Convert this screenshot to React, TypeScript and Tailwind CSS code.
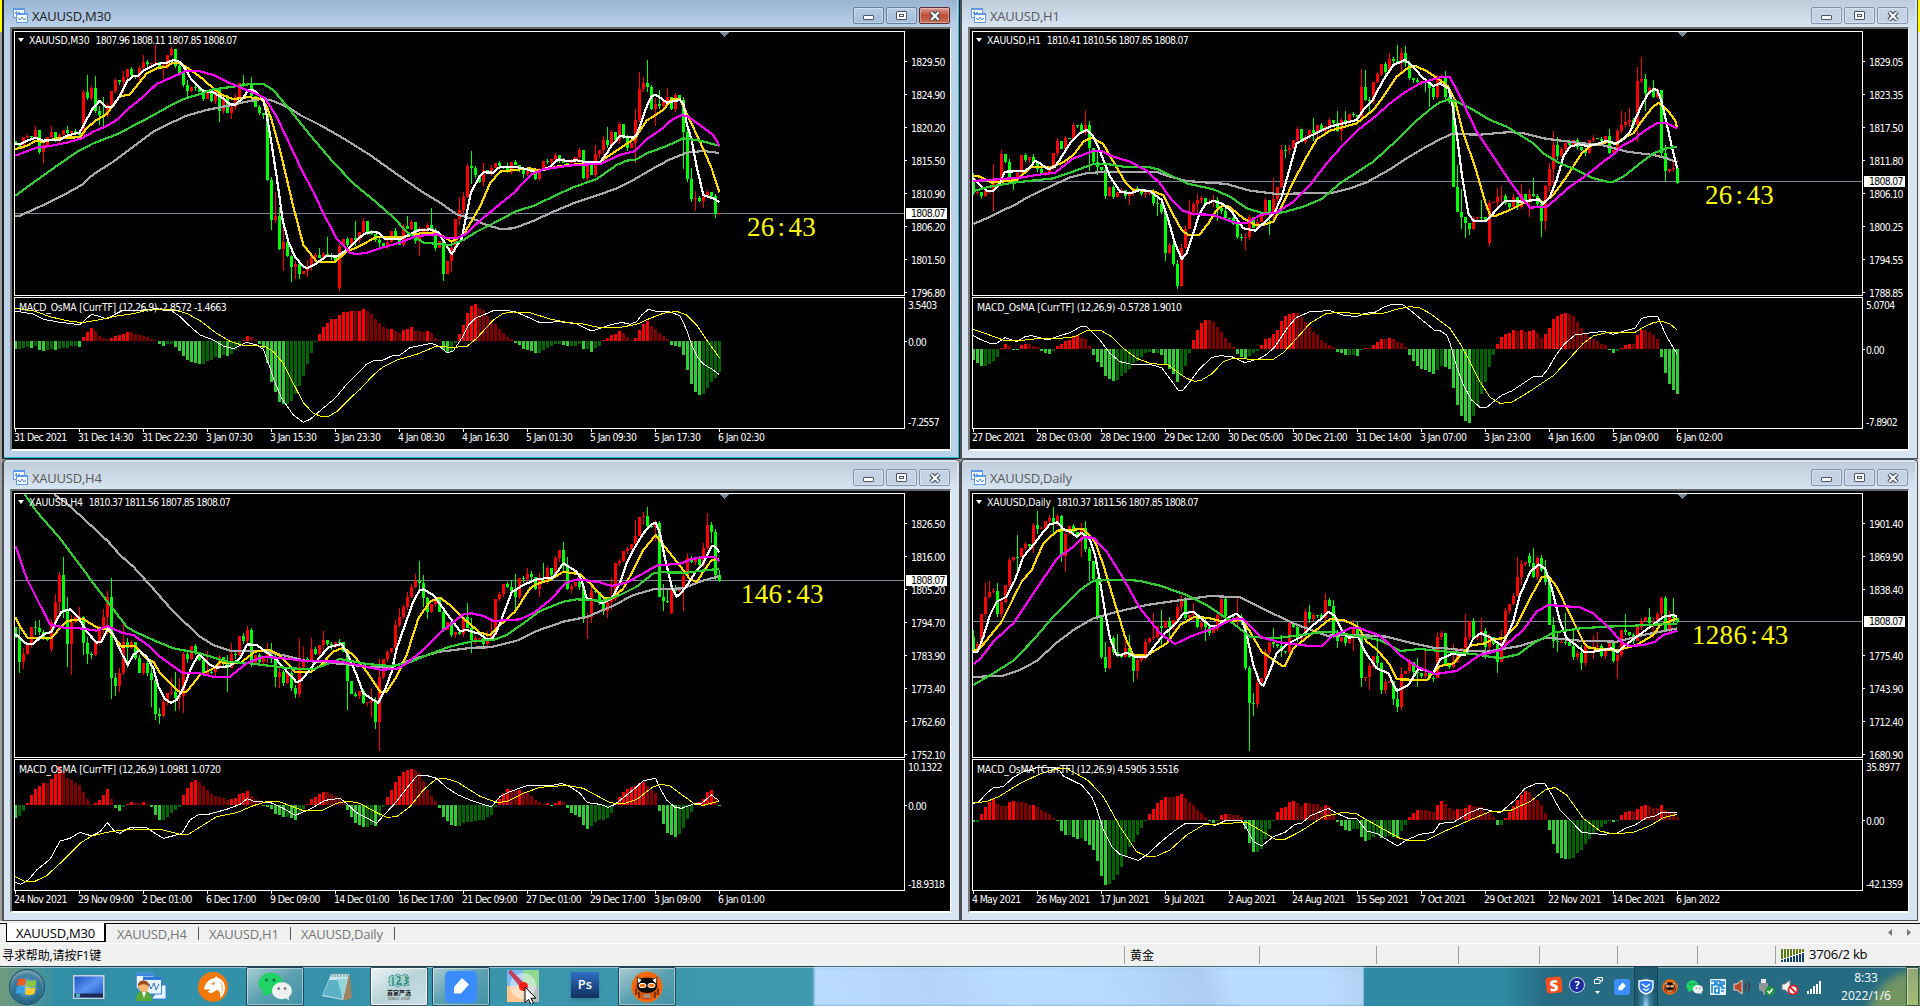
import type { ReactNode } from 'react';

// Chart data is stored in thirds of a pixel, one candle every 12 units.
const STEP = 12;

type Wicks = Record<number, [number, number]>;

interface ChartData {
  title: string;
  ohlc: string;
  macd: string;
  x0: number;
  y0: number;
  zero: number;
  price: number;
  prices: string[];
  range: [string, string];
  dates: string[];
  timer: string;
  timerX: number;
  open: number;
  closes: string;
  gaps: Record<number, number>;
  wicks: Wicks;
  hist: string;
  ma: { gray: string; green: string; gold: string; magenta: string; white: string };
  fast: string;
  slow: string;
}

const m30: ChartData = {
  title: 'XAUUSD,M30',
  ohlc: '1807.96 1808.11 1807.85 1808.07',
  macd: '-2.8572 -1.4663',
  x0: 46,
  y0: 0,
  zero: 1023,
  price: 640,
  prices: ['1829.50', '1824.90', '1820.20', '1815.50', '1810.90', '1806.20', '1801.50', '1796.80'],
  range: ['3.5403', '-7.2557'],
  dates: ['31 Dec 2021', '31 Dec 14:30', '31 Dec 22:30', '3 Jan 07:30', '3 Jan 15:30', '3 Jan 23:30', '4 Jan 08:30', '4 Jan 16:30', '5 Jan 01:30', '5 Jan 09:30', '5 Jan 17:30', '6 Jan 02:30'],
  timer: '26:43',
  timerX: 732,
  open: 424,
  closes:
    '436 436 412 408 412 390 455 436 412 396 424 405 390 398 393 400 404 276 293 264 334 345 345 315 273 240 245 232 207 226 232 205 186 192 188 186 205 196 165 147 197 220 254 272 262 264 275 297 275 302 265 334 293 338 320 290 250 255 250 288 322 340 346 540 660 648 748 726 768 800 792 822 814 802 772 765 773 763 767 770 785 738 717 735 713 720 696 662 697 703 720 730 738 726 692 710 735 678 686 667 724 705 685 675 690 743 722 822 784 745 657 630 592 498 504 524 545 510 520 503 490 497 497 515 486 495 510 523 514 512 537 510 484 486 478 465 480 488 490 484 472 450 535 495 525 463 450 420 435 396 420 372 413 443 428 360 267 250 262 327 312 318 305 291 327 286 300 396 536 597 595 603 590 576 588 642 640',
  gaps: { 81: 865 },
  wicks: {
    5: [378, 412], 7: [428, 488], 9: [378, 414], 13: [378, 402], 17: [270, 385], 18: [225, 300], 20: [228, 340], 21: [318, 375], 22: [290, 378], 27: [212, 280], 32: [165, 208], 35: [135, 190], 37: [188, 237], 43: [240, 290],
    51: [262, 365], 54: [310, 357], 57: [225, 262], 59: [230, 300], 64: [530, 690], 65: [577, 668], 66: [620, 750], 67: [675, 812], 69: [765, 846], 70: [782, 838], 71: [782, 836], 73: [780, 830], 76: [743, 775], 78: [711, 768], 85: [662, 738], 98: [648, 688],
    101: [680, 768], 104: [625, 690], 107: [718, 842], 109: [735, 816], 111: [592, 675], 112: [577, 650], 114: [453, 552], 117: [490, 557], 145: [435, 530], 147: [408, 468], 148: [382, 445], 155: [328, 490], 156: [216, 365], 157: [232, 277], 158: [180, 275], 160: [295, 378], 161: [270, 326],
    163: [264, 305], 167: [290, 507], 168: [388, 545], 169: [505, 605], 170: [574, 632], 172: [588, 624],
  },
  hist:
    '-24 -24 -21 -18 -20 -14 -26 -30 -28 -24 -26 -24 -20 -20 -15 -14 -18 12 27 38 30 16 8 6 9 14 17 20 27 26 21 17 15 12 6 3 -8 -14 -10 -8 -18 -30 -45 -57 -62 -66 -68 -68 -60 -58 -48 -50 -42 -44 -40 -28 -10 3 15 12 3 -8 -20 -65 -123 -153 -182 -190 -188 -180 -158 -135 -105 -70 -36 -3 21 42 54 66 67 79 86 87 90 89 90 96 90 81 66 54 42 36 37 30 24 33 36 42 30 30 27 30 24 9 4 -27 -33 -30 -6 21 48 84 105 111 99 93 75 62 50 36 24 12 5 -5 -12 -23 -26 -30 -36 -35 -26 -20 -14 -9 -8 -12 -15 -15 -14 -8 -24 -23 -32 -22 -15 3 9 18 20 30 23 12 3 9 33 51 60 45 36 24 15 6 -12 -15 -18 -42 -87 -129 -153 -162 -158 -140 -122 -110 -93',
  ma: {
    white:
      '46,432 58,433 82,422 106,413 130,422 154,420 178,420 202,407 238,398 250,378 262,355 275,330 299,302 318,320 338,320 358,290 382,243 400,228 415,228 430,212 470,192 500,188 520,180 540,186 558,210 575,240 610,273 640,277 670,295 690,313 706,314 730,293 745,270 765,272 790,300 800,345 812,415 830,530 848,660 865,725 885,770 910,800 922,804 945,793 980,768 1010,770 1040,750 1090,703 1115,695 1135,698 1155,718 1200,718 1250,692 1290,688 1315,697 1355,762 1385,715 1400,640 1412,580 1438,530 1452,517 1480,518 1500,500 1540,500 1570,505 1610,517 1650,500 1675,478 1700,483 1730,481 1760,487 1800,487 1820,460 1835,437 1860,408 1900,413 1912,400 1940,320 1955,288 1967,284 1980,293 2000,308 2040,300 2050,310 2060,370 2075,420 2090,500 2110,585 2140,595 2158,606',
    gold:
      '46,447 80,438 106,423 130,425 180,413 240,412 260,385 285,363 320,342 358,290 390,283 440,220 470,205 500,200 515,190 540,190 560,202 600,230 640,265 665,285 700,297 720,295 745,291 785,297 800,320 815,360 840,450 880,620 910,735 950,785 1005,785 1040,755 1080,738 1130,710 1200,712 1260,700 1310,697 1355,725 1390,705 1440,620 1470,550 1500,515 1590,505 1620,512 1680,498 1740,492 1800,485 1860,445 1905,415 1940,362 1990,330 2015,297 2040,297 2060,340 2100,425 2135,505 2158,577',
    magenta:
      '46,467 75,456 110,443 150,438 200,428 245,415 280,395 320,378 350,360 390,322 430,290 470,252 520,230 560,212 600,214 640,225 680,245 720,262 760,278 795,295 830,350 870,435 910,520 940,575 970,640 1010,715 1050,758 1070,763 1100,758 1150,742 1200,728 1250,708 1310,703 1340,715 1370,715 1400,700 1440,662 1500,612 1540,580 1595,523 1630,508 1720,495 1800,492 1860,465 1905,453 1940,418 1985,387 2015,360 2045,345 2065,350 2095,372 2140,405 2158,437',
    green:
      '46,588 90,555 160,505 235,453 280,430 350,403 430,362 500,323 545,299 590,285 640,268 700,260 760,251 792,253 820,270 870,330 930,405 1000,487 1060,550 1130,608 1180,652 1220,695 1270,728 1350,735 1390,720 1430,695 1480,670 1550,633 1600,618 1680,580 1720,562 1790,537 1850,495 1880,482 1910,478 1940,460 2000,438 2050,415 2100,422 2158,437',
    gray:
      '46,648 60,647 130,615 200,580 245,555 280,523 340,485 400,440 460,395 510,370 560,347 620,330 680,318 740,305 790,296 820,303 870,325 900,345 960,375 1030,415 1110,465 1190,522 1270,578 1320,608 1370,643 1430,660 1450,672 1500,687 1540,685 1600,663 1660,635 1720,610 1800,583 1850,565 1900,540 1960,505 2010,478 2060,458 2110,453 2158,459',
  },
  fast:
    '46,933 100,942 130,958 180,967 240,974 258,957 275,943 300,950 322,957 345,943 370,930 430,930 470,926 515,932 540,950 560,970 600,1005 640,1020 670,1038 700,1046 740,1027 770,1035 790,1048 805,1090 820,1135 845,1195 880,1245 910,1267 930,1258 965,1228 1005,1195 1040,1153 1075,1118 1100,1092 1120,1083 1150,1080 1175,1068 1200,1065 1230,1043 1295,1030 1320,1040 1340,1057 1358,1055 1385,1015 1405,975 1425,955 1445,947 1480,932 1510,930 1545,935 1580,950 1620,968 1680,965 1730,972 1775,993 1800,985 1830,975 1865,967 1890,973 1910,965 1925,945 1945,928 1965,933 2010,936 2040,947 2060,990 2075,1035 2095,1075 2110,1092 2135,1107 2158,1124',
  slow:
    '46,925 100,932 150,950 200,962 245,968 300,959 350,948 400,941 450,928 515,928 560,940 600,962 650,1000 690,1024 725,1035 795,1039 820,1055 850,1090 880,1150 910,1208 940,1240 965,1250 985,1249 1010,1235 1050,1195 1080,1168 1120,1125 1150,1100 1190,1080 1250,1063 1310,1038 1350,1042 1400,1040 1430,1015 1450,993 1480,960 1510,940 1540,936 1590,938 1650,957 1700,967 1750,972 1800,983 1850,984 1910,973 1950,955 1990,940 2030,934 2060,945 2090,975 2120,1020 2158,1073',
};

const h1: ChartData = {
  title: 'XAUUSD,H1',
  ohlc: '1810.41 1810.56 1807.85 1808.07',
  macd: '-0.5728 1.9010',
  x0: 40,
  y0: 0,
  zero: 1047,
  price: 544,
  prices: ['1829.05', '1823.35', '1817.50', '1811.80', '1806.10', '1800.25', '1794.55', '1788.85'],
  range: ['5.0704', '-7.8902'],
  dates: ['27 Dec 2021', '28 Dec 03:00', '28 Dec 19:00', '29 Dec 12:00', '30 Dec 05:00', '30 Dec 21:00', '31 Dec 14:00', '3 Jan 07:00', '3 Jan 23:00', '4 Jan 16:00', '5 Jan 09:00', '6 Jan 02:00'],
  timer: '26:43',
  timerX: 732,
  open: 545,
  closes:
    '580 575 588 573 570 545 540 463 485 533 540 520 465 480 470 487 508 522 515 505 460 423 446 415 418 375 375 398 376 443 485 500 510 588 561 590 577 570 588 580 565 570 583 580 575 608 613 635 758 735 793 857 745 686 637 612 600 595 608 605 600 625 632 655 655 673 710 713 712 652 683 665 645 600 635 598 560 450 450 443 420 388 425 412 390 400 375 393 378 360 370 393 360 365 342 345 350 262 299 303 247 222 192 215 178 183 190 160 190 234 240 247 243 247 265 290 230 228 290 305 560 635 650 668 688 655 652 652 660 608 605 592 588 610 622 590 622 582 600 582 588 612 662 558 506 435 467 447 428 436 420 440 450 460 420 413 418 422 408 458 450 393 375 367 360 375 242 237 280 265 290 270 460 513 507 503 548',
  gaps: { 129: 730 },
  wicks: {
    0: [518, 585], 5: [492, 632], 7: [450, 545], 10: [530, 570], 21: [415, 468], 28: [333, 405], 29: [362, 512], 31: [450, 525], 39: [572, 614], 46: [590, 648], 48: [630, 782], 50: [725, 798], 51: [780, 866], 52: [732, 862], 54: [600, 686], 56: [582, 640], 60: [585, 620],
    61: [592, 662], 68: [700, 750], 74: [600, 704], 75: [533, 668], 77: [436, 565], 78: [436, 473], 85: [353, 423], 91: [333, 395], 92: [355, 423], 93: [333, 380], 97: [207, 355], 98: [210, 302], 99: [290, 335], 104: [158, 210], 106: [135, 190], 107: [145, 215], 108: [138, 200],
    113: [238, 275], 114: [245, 322], 116: [225, 297], 118: [212, 300], 121: [495, 636], 122: [567, 686], 123: [650, 713], 124: [668, 705], 127: [600, 660], 131: [563, 622], 132: [557, 610], 137: [552, 628], 139: [568, 650], 140: [533, 592], 142: [610, 711], 143: [555, 690], 144: [490, 575], 145: [393, 580], 146: [410, 480],
    159: [387, 463], 162: [333, 400], 163: [337, 380], 164: [323, 380], 166: [200, 425], 167: [170, 250], 168: [222, 333], 170: [240, 295], 173: [435, 543], 175: [485, 517],
  },
  hist:
    '-33 -42 -51 -51 -45 -36 -24 3 15 9 -1 -3 12 15 15 9 5 -6 -12 -15 -6 9 15 24 27 36 42 33 30 9 -18 -39 -54 -80 -90 -96 -93 -81 -72 -60 -42 -36 -24 -12 -9 -12 -12 -18 -48 -60 -75 -99 -80 -50 -12 27 57 78 87 87 81 66 51 33 18 6 -15 -24 -27 -20 -12 -6 12 30 33 45 57 84 99 105 108 108 96 81 66 51 42 27 18 12 6 -9 -12 -18 -18 -17 -21 -3 3 3 12 21 30 30 33 30 21 18 6 -18 -36 -51 -60 -63 -69 -75 -63 -51 -54 -60 -117 -168 -201 -216 -222 -201 -171 -135 -99 -54 -18 15 36 45 48 57 54 57 51 54 57 48 33 45 63 90 99 105 108 105 99 81 63 45 36 30 24 15 12 -3 -12 -6 3 12 15 14 42 57 57 51 42 30 -24 -72 -105 -123 -135',
  ma: {
    white:
      '40,535 60,555 80,572 100,573 115,558 135,515 195,513 212,500 225,483 240,490 265,508 285,500 300,478 330,430 360,400 380,390 395,403 410,430 430,480 450,530 480,575 510,580 540,570 570,573 605,600 625,660 645,730 665,777 680,760 700,700 715,650 735,613 760,602 790,613 815,635 850,685 885,692 910,670 945,635 965,590 985,520 1010,430 1050,408 1110,380 1190,360 1210,330 1235,305 1270,240 1300,195 1335,180 1360,200 1385,230 1420,258 1440,250 1465,265 1475,300 1490,400 1505,520 1525,640 1540,662 1578,662 1595,645 1635,602 1685,605 1735,598 1748,612 1770,590 1790,540 1810,470 1830,440 1855,433 1880,438 1910,433 1940,422 1965,432 1990,418 2010,395 2025,360 2045,315 2065,280 2082,267 2092,270 2105,305 2120,370 2140,460 2152,505',
    gold:
      '40,527 60,530 95,548 170,540 215,500 270,503 310,487 340,465 370,425 395,413 430,432 460,485 495,545 520,570 575,573 610,585 640,645 665,690 685,705 718,705 745,670 770,630 785,618 805,618 850,655 885,674 910,675 940,665 965,620 1000,545 1040,470 1070,418 1110,392 1190,370 1240,330 1270,290 1310,230 1345,203 1365,198 1400,213 1440,240 1465,260 1485,300 1510,400 1545,500 1575,605 1590,645 1605,648 1650,630 1700,605 1735,597 1750,608 1780,585 1820,530 1865,460 1895,435 1950,425 1970,432 1990,415 2020,400 2040,370 2075,325 2095,308 2110,320 2130,340 2145,360 2152,385',
    magenta:
      '40,543 110,538 180,533 230,525 285,518 340,475 400,453 425,453 460,470 510,485 560,512 600,550 635,600 670,633 700,642 760,645 830,670 860,670 900,645 950,638 1000,605 1050,555 1100,490 1140,445 1190,393 1245,350 1290,310 1330,280 1380,250 1440,232 1468,230 1485,260 1510,310 1550,395 1580,440 1640,530 1690,600 1710,623 1760,620 1790,595 1830,560 1880,525 1930,485 1965,460 1990,435 2020,420 2050,395 2090,370 2120,370 2152,385',
    green:
      '40,573 90,560 160,548 280,535 330,518 400,492 440,492 490,500 560,500 595,508 640,530 680,550 760,568 810,590 860,625 910,640 970,637 1030,620 1085,597 1140,550 1240,485 1300,430 1360,370 1420,320 1440,307 1465,298 1490,305 1540,330 1590,360 1640,380 1680,405 1720,430 1750,460 1800,490 1850,510 1900,535 1940,545 1960,545 1990,530 2040,490 2080,460 2120,445 2152,440',
    gray:
      '40,672 80,655 130,630 160,617 210,588 270,560 330,532 380,520 440,515 520,515 590,516 630,530 680,543 800,552 870,572 950,582 1120,578 1170,565 1220,547 1290,508 1340,475 1390,445 1440,418 1475,402 1560,404 1650,396 1690,400 1750,415 1850,428 1930,436 2000,455 2080,465 2120,475 2152,487',
  },
  fast:
    '40,1007 60,1018 90,1030 110,1030 135,1013 170,1025 195,1010 215,1007 265,1020 290,1010 330,998 360,981 380,979 390,990 420,1020 450,1060 480,1085 510,1092 570,1093 605,1103 620,1123 640,1150 655,1171 668,1171 690,1145 720,1105 755,1073 780,1067 815,1070 855,1088 900,1075 920,1063 945,1040 965,1010 985,980 1010,952 1050,935 1110,932 1150,945 1190,950 1215,940 1245,937 1270,922 1295,913 1330,915 1350,930 1380,955 1425,992 1440,992 1460,1005 1470,1030 1490,1100 1510,1155 1535,1200 1560,1222 1578,1224 1595,1210 1625,1186 1655,1173 1690,1150 1720,1130 1745,1131 1765,1105 1785,1070 1815,1030 1845,1005 1880,1000 1930,994 1960,1003 2010,988 2025,985 2045,955 2070,949 2093,949 2100,965 2120,1010 2152,1063',
  slow:
    '40,988 80,1002 130,1020 170,1023 230,1016 290,1016 345,1010 380,992 425,993 455,1010 490,1045 530,1075 570,1090 625,1095 650,1115 680,1135 705,1144 725,1140 755,1122 790,1085 820,1075 880,1078 940,1078 970,1058 1010,1015 1050,970 1100,940 1150,937 1210,943 1270,940 1310,928 1350,920 1380,924 1410,940 1440,963 1470,985 1500,1030 1530,1085 1560,1145 1590,1192 1620,1210 1655,1207 1700,1180 1780,1127 1820,1085 1870,1030 1900,1008 1940,998 2025,997 2050,982 2080,968 2105,964 2130,972 2152,990',
};

const h4: ChartData = {
  title: 'XAUUSD,H4',
  ohlc: '1810.37 1811.56 1807.85 1808.07',
  macd: '1.0981 1.0720',
  x0: 46,
  y0: 21,
  zero: 1050,
  price: 376,
  prices: ['1826.50', '1816.00', '1805.20', '1794.70', '1783.90', '1773.40', '1762.60', '1752.10'],
  range: ['10.1322', '-18.9318'],
  dates: ['24 Nov 2021', '29 Nov 09:00', '2 Dec 01:00', '6 Dec 17:00', '9 Dec 09:00', '14 Dec 01:00', '16 Dec 17:00', '21 Dec 09:00', '27 Dec 01:00', '29 Dec 17:00', '3 Jan 09:00', '6 Jan 01:00'],
  timer: '146:43',
  timerX: 726,
  open: 515,
  closes:
    '550 620 598 570 516 520 532 545 555 500 442 360 465 567 500 487 485 563 598 600 560 517 487 427 670 692 653 562 580 562 608 655 625 653 675 778 782 740 713 712 730 722 597 612 573 592 615 657 650 652 640 607 625 640 597 600 542 557 525 628 600 620 610 600 612 667 652 683 655 698 718 637 612 618 582 597 570 556 568 575 560 562 590 677 718 722 708 745 742 735 800 667 612 592 578 511 487 457 427 395 378 385 430 470 447 430 470 525 500 540 532 537 487 520 555 550 548 567 548 540 432 417 387 397 408 425 370 372 356 365 402 375 382 340 360 310 285 333 402 393 382 395 490 487 408 410 440 468 442 432 323 318 288 283 267 243 187 182 212 217 205 425 437 440 398 408 395 363 310 320 310 330 280 210 230 360 378',
  gaps: { 9: 583, 13: 465, 164: 475 },
  wicks: {
    1: [520, 655], 2: [580, 642], 5: [497, 540], 6: [495, 540], 10: [418, 508], 11: [350, 490], 12: [306, 490], 13: [427, 635], 14: [480, 660], 16: [455, 495], 17: [482, 600], 18: [547, 628], 22: [462, 555], 23: [408, 540], 24: [370, 732], 25: [655, 722], 26: [640, 710], 27: [507, 660],
    28: [548, 640], 31: [600, 655], 34: [620, 755], 35: [655, 795], 36: [760, 806], 39: [670, 720], 40: [650, 767], 41: [668, 765], 42: [590, 773], 48: [588, 660], 53: [600, 710], 54: [563, 640], 58: [513, 565], 63: [565, 625], 64: [565, 625], 65: [600, 697], 66: [640, 698], 70: [690, 730], 71: [549, 725],
    72: [575, 640], 74: [550, 618], 77: [528, 600], 83: [590, 765], 89: [698, 785], 90: [727, 822], 91: [613, 887], 95: [495, 580], 96: [460, 515], 98: [410, 465], 100: [357, 398], 101: [318, 410], 102: [360, 455], 103: [427, 492], 113: [445, 510], 114: [490, 594], 118: [528, 583], 119: [490, 550],
    124: [375, 410], 125: [357, 465], 128: [338, 385], 131: [355, 425], 132: [323, 385], 136: [285, 320], 137: [262, 350], 138: [307, 405], 142: [390, 503], 143: [475, 552], 144: [395, 505], 147: [430, 480], 148: [430, 490], 149: [370, 465], 155: [195, 270], 157: [170, 210], 158: [155, 215], 160: [195, 258], 162: [388, 468], 163: [405, 445],
    164: [395, 476], 167: [350, 467], 168: [293, 365], 172: [263, 335], 173: [174, 285], 174: [202, 265], 175: [222, 375], 176: [345, 380],
  },
  hist:
    '-39 -33 -18 6 30 48 57 66 66 78 93 117 99 81 75 66 60 39 18 3 6 15 30 48 18 -9 -18 -6 4 9 6 6 9 3 -6 -30 -45 -45 -36 -24 -15 -6 30 51 69 75 69 57 45 33 27 24 21 15 18 21 33 36 42 27 18 9 -3 -6 -12 -27 -30 -36 -36 -39 -45 -27 -12 3 18 24 33 39 39 33 27 18 6 -15 -36 -54 -60 -66 -66 -60 -63 -36 -6 24 45 69 87 99 105 108 104 95 72 45 27 12 -9 -36 -48 -60 -63 -63 -54 -51 -51 -48 -45 -45 -36 -30 -6 18 36 48 48 42 45 39 36 27 15 9 3 6 -3 6 12 9 -9 -24 -30 -36 -60 -72 -63 -51 -45 -45 -39 -24 6 24 39 48 54 57 66 69 57 45 36 -18 -57 -84 -90 -96 -87 -69 -42 -21 6 9 18 39 45 20 -3',
  ma: {
    white:
      '46,537 80,567 100,567 130,538 155,530 170,495 185,470 210,463 235,487 260,530 290,563 305,560 325,517 340,540 365,595 383,630 400,600 417,587 440,605 460,640 475,695 495,732 513,744 530,735 550,700 575,635 597,598 630,630 650,638 690,633 720,610 742,568 770,570 800,592 830,615 870,660 890,682 905,675 940,630 985,577 1025,567 1045,603 1070,660 1090,715 1135,744 1155,705 1175,650 1190,580 1215,510 1240,440 1258,407 1270,403 1300,420 1340,475 1380,528 1400,525 1425,533 1440,537 1460,553 1477,550 1490,530 1515,465 1535,412 1570,390 1610,373 1660,367 1690,325 1730,350 1745,375 1760,430 1790,437 1805,445 1835,430 1860,385 1880,325 1900,285 1930,235 1955,207 1967,203 1980,235 1995,310 2015,395 2030,425 2045,412 2065,385 2090,345 2110,325 2135,272 2145,275 2158,292',
    gold:
      '46,487 60,515 83,548 155,548 175,525 200,498 250,492 290,517 325,525 365,575 405,572 440,612 460,620 480,655 510,685 540,712 560,710 600,660 640,640 660,622 720,625 765,590 810,585 840,602 885,650 930,652 960,633 1000,590 1030,578 1060,600 1100,650 1140,710 1160,710 1190,665 1220,600 1255,490 1290,440 1320,428 1350,450 1390,490 1440,533 1470,541 1490,520 1545,470 1590,400 1610,387 1650,375 1690,350 1740,358 1770,385 1810,428 1840,428 1870,400 1900,345 1930,285 1967,240 1990,270 2030,320 2070,372 2090,382 2110,350 2135,315 2158,311',
    magenta:
      '46,272 80,370 120,450 150,508 200,520 240,520 290,527 322,513 365,533 400,540 450,575 480,605 550,655 600,655 640,665 690,665 740,625 790,605 850,610 920,618 1020,620 1080,632 1140,644 1190,642 1220,625 1270,585 1330,525 1390,478 1415,475 1450,483 1480,498 1560,493 1600,475 1650,435 1700,382 1735,373 1800,382 1835,393 1880,383 1930,355 1970,332 2045,325 2075,312 2110,307 2145,305 2158,318',
    green:
      '74,118 110,170 180,250 240,330 280,385 330,450 380,515 400,528 460,555 520,580 600,595 680,620 750,625 870,640 940,643 1020,612 1100,627 1170,633 1220,625 1290,597 1350,575 1420,558 1480,555 1520,540 1570,505 1620,468 1690,440 1730,433 1810,438 1860,420 1910,395 1960,355 1985,352 2060,353 2120,345 2158,342',
    gray:
      '162,118 200,145 250,190 325,260 360,300 400,335 450,390 520,470 600,545 640,570 690,587 780,587 860,603 920,618 1030,627 1100,635 1170,638 1240,612 1320,590 1420,578 1470,577 1550,557 1610,528 1690,500 1760,486 1840,452 1900,420 1960,403 2050,400 2100,380 2158,363',
  },
  fast:
    '46,1282 62,1288 85,1275 110,1245 150,1213 180,1158 210,1150 240,1132 275,1143 300,1130 322,1103 345,1130 360,1135 390,1118 440,1118 465,1135 490,1150 545,1136 570,1095 595,1079 625,1078 680,1063 720,1048 742,1031 765,1040 810,1042 850,1060 886,1081 935,1060 975,1036 1020,1030 1045,1050 1065,1070 1130,1105 1150,1082 1185,1045 1220,1000 1250,963 1275,960 1310,970 1340,998 1375,1020 1410,1035 1445,1047 1475,1055 1500,1025 1530,1010 1580,992 1650,993 1685,985 1710,995 1740,1015 1762,1043 1800,1048 1825,1057 1845,1048 1870,1028 1905,1000 1930,977 1967,970 1980,1000 2000,1035 2025,1057 2045,1060 2080,1047 2105,1045 2134,1020 2158,1038',
  slow:
    '46,1265 75,1280 100,1281 140,1262 180,1225 240,1165 275,1143 330,1130 400,1122 490,1125 540,1138 565,1138 610,1110 650,1085 710,1073 760,1052 800,1040 840,1041 870,1052 910,1067 965,1067 1010,1045 1045,1038 1080,1045 1130,1073 1160,1087 1190,1085 1230,1055 1270,1005 1305,975 1330,969 1370,980 1440,1024 1490,1042 1520,1040 1570,1015 1620,997 1700,991 1750,1000 1830,1043 1870,1047 1910,1033 1960,995 1985,988 2010,993 2040,1015 2085,1048 2110,1051 2158,1038',
};

const daily: ChartData = {
  title: 'XAUUSD,Daily',
  ohlc: '1810.37 1811.56 1807.85 1808.07',
  macd: '4.5905 3.5516',
  x0: 40,
  y0: 21,
  zero: 1095,
  price: 499,
  prices: ['1901.40', '1869.90', '1838.40', '', '1775.40', '1743.90', '1712.40', '1680.90'],
  range: ['35.8977', '-42.1359'],
  dates: ['4 May 2021', '26 May 2021', '17 Jun 2021', '9 Jul 2021', '2 Aug 2021', '24 Aug 2021', '15 Sep 2021', '7 Oct 2021', '29 Oct 2021', '22 Nov 2021', '14 Dec 2021', '6 Jan 2022'],
  timer: '1286:43',
  timerX: 719,
  open: 545,
  closes:
    '590 567 478 427 412 407 478 440 390 315 305 305 280 268 272 210 222 220 198 188 203 183 303 237 213 230 240 220 282 317 372 485 607 640 577 592 600 605 580 605 647 615 605 560 550 547 512 520 497 515 495 455 432 490 480 478 515 503 517 535 522 480 433 483 490 495 485 500 640 743 748 683 670 590 562 567 572 587 592 503 515 553 540 470 492 480 480 490 435 452 540 557 545 565 540 515 540 668 667 632 603 625 705 680 677 733 757 657 648 620 650 655 662 655 670 670 547 535 630 635 620 585 578 547 497 550 540 527 577 545 567 620 567 467 447 422 367 328 320 325 367 310 345 380 510 558 562 560 562 573 605 595 623 573 580 577 573 602 582 565 617 600 525 530 540 557 517 497 487 503 500 477 430 528 483 490 500',
  gaps: { 35: 550, 139: 302 },
  wicks: {
    0: [525, 595], 3: [383, 485], 4: [378, 430], 6: [385, 485], 11: [240, 345], 15: [205, 295], 16: [168, 238], 20: [157, 240], 22: [180, 320], 23: [225, 350], 27: [205, 305], 28: [198, 290], 29: [275, 378], 33: [560, 650], 36: [537, 605], 38: [550, 605], 39: [540, 610], 40: [595, 680], 41: [600, 672],
    45: [475, 555], 47: [465, 575], 49: [485, 548], 52: [420, 470], 53: [425, 495], 55: [445, 498], 58: [485, 557], 66: [430, 510], 69: [632, 887], 70: [713, 782], 71: [670, 760], 75: [520, 580], 77: [540, 605], 79: [500, 597], 84: [450, 503], 88: [413, 505], 90: [435, 550], 91: [525, 578], 95: [495, 587], 96: [500, 550],
    97: [540, 695], 99: [625, 705], 101: [557, 640], 102: [620, 718], 105: [680, 750], 106: [700, 770], 107: [635, 765], 111: [610, 695], 113: [580, 670], 116: [535, 660], 120: [568, 640], 123: [477, 580], 127: [490, 560], 128: [520, 612], 131: [560, 653], 132: [525, 622], 136: [307, 423], 137: [315, 390], 140: [279, 370],
    142: [300, 350], 143: [315, 390], 145: [485, 580], 146: [530, 590], 148: [473, 570], 150: [520, 615], 152: [570, 645], 155: [540, 612], 156: [530, 580], 161: [590, 671], 163: [477, 540], 169: [460, 510], 170: [490, 550], 172: [425, 490], 173: [422, 530], 174: [468, 530], 175: [430, 505],
  },
  hist:
    '-6 -6 18 39 54 66 48 42 42 54 57 54 54 51 45 46 39 30 24 18 6 -3 -33 -45 -45 -51 -57 -54 -63 -75 -90 -123 -168 -195 -192 -180 -165 -141 -108 -81 -66 -45 -24 -3 18 33 51 60 70 70 69 72 78 66 54 45 30 21 9 -4 -9 -3 15 18 18 15 15 9 -27 -69 -96 -96 -87 -57 -27 -3 24 36 39 54 57 51 42 51 51 48 48 39 45 42 15 -6 -18 -30 -33 -27 -27 -51 -63 -60 -51 -45 -54 -51 -48 -51 -54 -33 -15 9 21 30 30 30 27 24 45 57 48 36 30 33 33 36 45 42 39 39 24 21 9 -15 -15 6 24 42 60 75 87 84 69 60 45 21 -30 -72 -99 -114 -117 -117 -114 -99 -90 -72 -57 -39 -33 -21 -12 -3 -6 -3 15 24 27 27 33 42 45 42 36 36 45 30 24 21 9',
  ma: {
    white:
      '40,592 52,592 70,545 90,480 110,440 140,425 165,375 190,305 220,270 250,230 270,208 292,202 310,222 335,233 350,245 365,233 390,255 405,300 420,380 435,470 450,550 470,600 485,600 500,593 525,605 560,605 590,565 610,540 650,502 670,475 700,470 720,487 750,512 770,515 800,490 830,476 845,490 860,540 880,630 900,685 910,692 925,660 950,595 985,565 1025,545 1050,518 1085,490 1105,470 1125,483 1145,525 1165,548 1195,545 1215,590 1250,640 1285,655 1310,708 1345,690 1375,642 1400,647 1420,655 1440,613 1475,597 1515,600 1540,550 1562,535 1590,547 1625,572 1640,545 1660,500 1680,420 1710,352 1735,328 1755,340 1775,400 1800,500 1820,550 1850,572 1875,592 1900,590 1955,580 1972,592 2000,567 2040,538 2085,505 2110,485 2140,480 2152,485',
    gold:
      '40,588 60,580 125,500 160,430 185,380 215,345 250,265 292,227 370,222 405,260 430,330 460,430 495,545 520,600 560,602 620,565 660,510 700,487 740,488 790,500 845,495 870,530 905,590 965,632 975,632 1000,580 1050,540 1110,492 1150,495 1195,515 1220,560 1250,583 1290,630 1310,673 1400,675 1440,633 1480,625 1530,572 1575,565 1600,552 1630,550 1670,510 1710,430 1745,367 1765,363 1790,395 1840,500 1870,560 1885,578 1925,583 1975,585 2030,570 2080,540 2100,510 2152,490',
    magenta:
      '40,627 60,613 100,560 160,505 230,400 292,310 340,275 370,247 400,248 440,290 490,370 540,460 600,535 645,567 690,545 760,520 820,492 850,492 905,547 960,562 1040,572 1087,572 1115,545 1170,520 1200,520 1260,542 1320,600 1370,635 1425,657 1440,655 1490,648 1560,600 1620,585 1690,525 1730,470 1765,450 1860,457 1900,475 1940,512 1990,565 2010,573 2050,570 2085,560 2110,540 2152,527',
    green:
      '40,690 100,655 160,617 220,555 280,485 360,405 400,377 500,374 540,378 600,392 680,420 740,450 800,490 870,545 940,550 1010,542 1080,532 1115,530 1160,538 1260,555 1320,588 1380,582 1440,588 1540,597 1620,610 1675,598 1720,565 1780,533 1860,520 1940,515 2020,512 2100,508 2152,506',
    gray:
      '40,666 130,662 180,645 230,618 290,563 340,525 400,490 480,468 560,450 650,437 750,423 840,427 900,457 1000,505 1100,542 1200,540 1280,545 1350,563 1420,578 1440,578 1520,587 1580,590 1680,573 1760,548 1860,557 1970,560 2050,540 2152,520',
  },
  fast:
    '40,1045 55,1042 80,1015 100,998 130,995 160,967 190,950 230,938 280,937 300,948 310,963 365,990 395,1025 410,1060 430,1125 455,1175 480,1198 535,1216 560,1200 600,1163 640,1130 675,1106 740,1105 765,1112 800,1095 845,1098 860,1120 880,1160 905,1173 940,1145 975,1132 1005,1108 1025,1105 1050,1083 1105,1060 1130,1075 1165,1090 1190,1090 1220,1128 1250,1135 1312,1173 1340,1155 1380,1138 1420,1132 1440,1105 1480,1102 1525,1075 1560,1060 1620,1073 1665,1035 1695,1000 1730,985 1755,987 1770,1010 1800,1065 1830,1095 1865,1132 1925,1138 1970,1135 2000,1118 2025,1110 2060,1088 2085,1083 2105,1072 2152,1073',
  slow:
    '40,1043 80,1040 120,1023 180,985 240,957 290,941 320,940 350,957 385,977 430,1025 480,1115 530,1190 560,1204 590,1203 630,1185 680,1140 730,1110 800,1105 860,1102 900,1125 945,1152 975,1153 1020,1130 1090,1085 1150,1072 1190,1077 1230,1100 1320,1150 1350,1157 1400,1155 1440,1135 1530,1095 1590,1070 1650,1067 1710,1040 1755,1005 1785,997 1820,1020 1870,1090 1920,1128 1960,1137 2020,1132 2070,1112 2110,1088 2152,1078',
};

const nums = (s: string) => s.split(' ').map(Number);

function PricePlot({ c }: { c: ChartData }) {
  const closes = nums(c.closes);
  return (
    <svg
      width="889"
      height="263"
      viewBox={`${c.x0 - 1} ${c.y0 + 96} 2667 789`}
      shapeRendering="crispEdges"
      className="block"
    >
      <rect x={c.x0 - 1} y={c.price - 1} width="2667" height="3" fill="#778899" />
      {closes.map((close, i) => {
        const open = c.gaps[i] ?? (i ? closes[i - 1] : c.open);
        const x = c.x0 + i * STEP;
        const top = Math.min(open, close);
        const bottom = Math.max(open, close);
        const [hi, lo] = c.wicks[i] ?? [top - ((i * 7) % 14), bottom + ((i * 5) % 12)];
        return (
          <g key={i} fill={close < open ? '#ff0000' : '#00ff00'}>
            <rect x={x - 1} y={Math.min(hi, top)} width="3" height={Math.max(lo, bottom) - Math.min(hi, top)} />
            <rect x={x - 4} y={top} width="9" height={Math.max(3, bottom - top)} />
          </g>
        );
      })}
      <g fill="none" strokeWidth="6.6" strokeLinejoin="round">
        <polyline points={c.ma.gray} stroke="#a9a9a9" />
        <polyline points={c.ma.gold} stroke="#ffd700" />
        <polyline points={c.ma.white} stroke="#ffffff" />
        <polyline points={c.ma.green} stroke="#32cd32" />
        <polyline points={c.ma.magenta} stroke="#ff00ff" />
      </g>
      <path d={`M${c.x0 + 2114} ${c.y0 + 96}h27l-13.500 14z`} fill="#778899" />
    </svg>
  );
}

function barColor(v: number, prev: number) {
  if (v > 0) return v > prev ? '#ff0000' : '#800000';
  return v < prev ? '#32cd32' : '#006400';
}

function MacdPlot({ c }: { c: ChartData }) {
  const hist = nums(c.hist);
  return (
    <svg
      width="889"
      height="130"
      viewBox={`${c.x0 - 1} ${c.y0 + 894} 2667 390`}
      shapeRendering="crispEdges"
      className="block"
    >
      {hist.map((v, i) => (
        <rect
          key={i}
          x={c.x0 + i * STEP - 4}
          y={v > 0 ? c.zero - v : c.zero}
          width="9"
          height={Math.max(3, Math.abs(v))}
          fill={barColor(v, hist[i - 1] ?? 0)}
        />
      ))}
      <g fill="none" strokeWidth="3">
        <polyline points={c.fast} stroke="#ffffff" />
        <polyline points={c.slow} stroke="#ffff00" />
      </g>
    </svg>
  );
}

const chartFont = "font-['DejaVu_Sans_Condensed','DejaVu_Sans',sans-serif] text-[10.4px] leading-[12px] tracking-[-0.72px]";

function Chart({ c }: { c: ChartData }) {
  // Row of the zero line and of the last price, in pixels from the top of the black area
  const zeroTop = Math.round((c.zero - c.y0) / 3) - 29;
  const priceTop = Math.round((c.price - c.y0) / 3) - 29;
  const [mins, secs] = c.timer.split(':');
  return (
    <div className={`relative flex h-[420px] w-[938px] bg-black text-white ${chartFont}`}>
      <div className="w-[893px] pl-[2px] pt-[2px]">
        <div className="relative h-[265px] border border-white">
          <PricePlot c={c} />
          <div className="absolute left-[3px] top-[2px] flex items-center whitespace-pre">
            <span className="mr-[5px] h-0 w-0 border-x-[3.5px] border-t-4 border-x-transparent border-t-white" />
            <span className="mr-[6px] tracking-[-0.2px]">{c.title}</span>
            {c.ohlc}
          </div>
          <div
            className="absolute font-['Liberation_Serif',serif] text-[27px] leading-[24px] tracking-[0.3px] text-[#ffff00]"
            style={{ left: c.timerX, top: priceTop - 1 }}
          >
            {mins}
            <span className="px-[3px]">:</span>
            {secs}
          </div>
        </div>
        <div className="relative mt-px h-[132px] border border-white">
          <MacdPlot c={c} />
          <div className="absolute left-1 top-[3px] whitespace-nowrap">
            <span className="tracking-[-0.2px]">MACD_OsMA [CurrTF] </span>
            <span className="tracking-[-0.55px]">(12,26,9) {c.macd}</span>
          </div>
        </div>
        <div className="flex tracking-[-0.64px]">
          {c.dates.map((d) => (
            <div key={d} className="w-16 shrink-0 whitespace-nowrap">
              <div className="ml-px h-[3px] w-px bg-white" />
              <div className="-mt-px">{d}</div>
            </div>
          ))}
        </div>
      </div>
      <div className="w-[45px] pt-[16px]">
        {c.prices.map((p, i) => (
          <div key={i} className="flex h-[33px] items-center">
            {p && <span className="mr-[4px] h-px w-[2px] bg-white" />}
            {p}
          </div>
        ))}
      </div>
      <div className="absolute left-[896px] top-[270px]">{c.range[0]}</div>
      <div className="absolute left-[896px]" style={{ top: zeroTop - 5 }}>0.00</div>
      <div className="absolute left-[893px] h-px w-[2px] bg-white" style={{ top: zeroTop }} />
      <div className="absolute left-[896px] top-[387px]">{c.range[1]}</div>
      <div
        className="absolute left-[894px] h-[11px] w-[41px] bg-white pl-[5px] leading-[11px] text-black"
        style={{ top: priceTop - 5 }}
      >
        1808.07
      </div>
    </div>
  );
}

function ChartIcon() {
  return (
    <svg width="15" height="15" viewBox="0 0 15 15" fill="none" shapeRendering="crispEdges">
      <rect x=".5" y=".5" width="11" height="9" fill="#fff" stroke="#5b9bea" />
      <path d="M1 1.500h10" stroke="#5b9bea" />
      <path d="M2 6l1.500-2L5 6l1.500-2" stroke="#5b9bea" />
      <rect x="3.500" y="5.500" width="11" height="9" fill="#fff" stroke="#5b9bea" />
      <path d="M4 6.500h10" stroke="#5b9bea" />
      <path d="M5 10l2 2 2-3 2 3 2-2" stroke="#4b86dd" shapeRendering="auto" />
    </svg>
  );
}

function TitleButton({ close, active, children }: { close?: boolean; active?: boolean; children: ReactNode }) {
  const look =
    close && active
      ? 'border-[#5c2a31] bg-linear-to-b from-[#dc9d92] via-[#bd4a34] to-[#c8745c]'
      : active
        ? 'border-[#66809f] bg-linear-to-b from-[#b9cde4] to-[#a2bcd8]'
        : 'border-[#8492ad] bg-[#c4d2e4]';
  return (
    <div className={`flex h-[17px] w-[31px] items-center justify-center rounded-[2px] border shadow-[inset_0_0_0_1px_rgba(255,255,255,0.35)] ${look}`}>
      {children}
    </div>
  );
}

function ChartWindow({ c, active, lower }: { c: ChartData; active?: boolean; lower?: boolean }) {
  return (
    <div
      className={`w-[958px] border-b border-l-2 border-r pl-[6px] pr-[8px] ${
        lower ? 'h-[462px] rounded-t-[5px] border-t pt-[2px]' : 'h-[459px]'
      } ${
        active
          ? 'border-[#1b2026] bg-[#bad1ea] shadow-[inset_-1px_-1px_0_#28c4dc]'
          : 'border-[#4d4f54] bg-[#d7e4f2]'
      }`}
    >
      <div
        className={`-ml-[6px] -mr-[6px] flex h-[27px] items-center pl-[9px] pr-[7px] ${
          active
            ? 'bg-linear-to-b from-[#9ab4d2] to-[#bad1ea]'
            : 'bg-linear-to-b from-[#bfcddb] to-[#d7e4f2]'
        }`}
      >
        <div className="mt-[3px]"><ChartIcon /></div>
        <div
          className={`ml-[4px] mt-[4px] flex-1 font-['Open_Sans',sans-serif] text-[13px] leading-[18px] tracking-[-0.22px] ${
            active ? 'text-[#1a1a1a]' : 'text-[#585858]'
          }`}
        >
          {c.title}
        </div>
        <div className="mt-[4px] flex gap-[2px]">
          <TitleButton active={active}>
            <div className="mt-[3px] h-[5px] w-[11px] rounded-[1px] border border-[#4c5566] bg-white" />
          </TitleButton>
          <TitleButton active={active}>
            <div className="flex h-[9px] w-[11px] items-center justify-center rounded-[1px] border border-[#4c5566] bg-white">
              <div className="h-[3px] w-[5px] border border-[#4c5566]" />
            </div>
          </TitleButton>
          <TitleButton active={active} close>
            <svg width="12" height="10" viewBox="0 0 12 10">
              <path d="M2 1l8 8m0-8l-8 8" stroke="#3f4757" strokeWidth="4.400" />
              <path d="M2.300 1.300l7.400 7.400m0-7.400l-7.400 7.400" stroke="#fff" strokeWidth="2.200" />
            </svg>
          </TitleButton>
        </div>
      </div>
      <div className="border-b-2 border-l-2 border-r border-t-2 border-b-white border-l-[#77797b] border-r-white border-t-[#68696b]">
        <Chart c={c} />
      </div>
    </div>
  );
}

function BossCat({ size }: { size: number }) {
  return (
    <svg width={size} height={size} viewBox="0 0 32 32">
      <circle cx="16" cy="16" r="15.500" fill="#f26a0b" />
      <circle cx="16" cy="17" r="12" fill="#d9550a" />
      <path d="M7 9c3-3 15-3 18 0l1 6c0 4-4 7-10 7S6 19 6 15z" fill="#0c0c0c" />
      <path d="M6 6l5 3-4 4zM26 6l-5 3 4 4z" fill="#fff" stroke="#0c0c0c" strokeWidth=".7" />
      <rect x="8" y="12.500" width="7" height="4" rx="2" fill="#ff7b12" stroke="#fff" />
      <rect x="17" y="12.500" width="7" height="4" rx="2" fill="#ff7b12" stroke="#fff" />
      <path d="M12.500 23.500h7v3h-7z" fill="#999" />
      <path d="M5 18v6M8 21v6M27 18v6M24 21v6" stroke="#5a2507" strokeWidth="1.500" />
    </svg>
  );
}

function BlueNote({ size }: { size: number }) {
  return (
    <svg width={size} height={size} viewBox="0 0 32 32">
      <rect width="32" height="32" rx="5" fill="#3b8cff" />
      <path d="M9 22.500V16l8-9 7 6.500-8 9z" fill="#fff" />
    </svg>
  );
}

function WeChat({ size }: { size: number }) {
  return (
    <svg width={size} height={size} viewBox="0 0 32 32">
      <ellipse cx="12" cy="12.500" rx="11.500" ry="10" fill="#1fd366" />
      <path d="M5 19l-1 6 6-3z" fill="#1fd366" />
      <circle cx="8" cy="9.500" r="1.600" fill="#14793d" />
      <circle cx="15" cy="9.500" r="1.600" fill="#14793d" />
      <ellipse cx="22.500" cy="19.500" rx="9.500" ry="8" fill="#eef0f0" />
      <path d="M25 25l4 4 0-6z" fill="#eef0f0" />
      <circle cx="19.500" cy="17.500" r="1.300" fill="#777" />
      <circle cx="25.500" cy="17.500" r="1.300" fill="#777" />
    </svg>
  );
}

function StartOrb() {
  return (
    <div className="flex h-[36px] w-[36px] items-center justify-center rounded-full border border-[#1b4e66] bg-radial from-[#8fd6ee] via-[#2c7296] to-[#123f5b] shadow-[inset_0_3px_5px_rgba(255,255,255,0.5)]">
      <svg width="24" height="24" viewBox="0 0 24 24">
        <path d="M3 4.500c3-1.500 5-1.500 8 0L10 11c-3-1.500-5-1.500-8 0z" fill="#ee5a24" />
        <path d="M12 5c3 1.300 6 1.300 9.500-.5L20.500 11c-3 1.700-6 1.700-9.500.3z" fill="#8cc63e" />
        <path d="M2 12c3-1.300 5-1.300 8 0L9 19c-3-1.500-5.500-1.500-8.500 0z" fill="#3aa0e8" />
        <path d="M11 12.500c3 1.300 6 1.300 9.500-.5l-1 6.800c-3.500 1.700-6.500 1.700-9.500.3z" fill="#ffc928" />
      </svg>
    </div>
  );
}

function DesktopIcon() {
  return (
    <svg width="32" height="26" viewBox="0 0 32 26">
      <defs>
        <linearGradient id="scr" x1="0" y1="0" x2="1" y2="1">
          <stop offset="0" stopColor="#1f52c4" />
          <stop offset=".5" stopColor="#5b93f0" />
          <stop offset="1" stopColor="#1c4dc0" />
        </linearGradient>
      </defs>
      <rect x=".75" y="1.750" width="30" height="22.500" fill="url(#scr)" stroke="#c9d2d8" strokeWidth="1.500" />
      <path d="M1.500 19.500h28.500v4H1.500z" fill="#1c2b55" />
      <circle cx="5" cy="21.500" r="2.200" fill="#4fb3c8" />
    </svg>
  );
}

function TraderIcon() {
  return (
    <svg width="32" height="30" viewBox="0 0 32 30">
      <rect x="1.500" y="1" width="17" height="15" fill="#e9f3ff" stroke="#5b9be6" />
      <path d="M1.500 1h17v3h-17z" fill="#3f86dd" />
      <path d="M17 27h14V13h-4" fill="#e9f3ff" stroke="#3d86de" />
      <rect x="8.500" y="5" width="18" height="17" fill="#e9f3ff" stroke="#3d86de" />
      <path d="M8.500 5h18v3h-18z" fill="#2b78d8" />
      <path d="M12 18l2-6 2 5 3-6 2 7 3-6" stroke="#2f6dc0" fill="none" />
      <path d="M1 29c0-7 3-10 8-10s8 3 8 10z" fill="#58a839" />
      <circle cx="8.500" cy="14.500" r="5.500" fill="#f5b376" />
      <path d="M3 14.500c-1-8 12-8 11 0-3-3-8-3-11 0z" fill="#9a4e16" />
      <path d="M7 20l2 6 2-6z" fill="#fff" />
    </svg>
  );
}

function CheetahIcon() {
  return (
    <svg width="30" height="30" viewBox="0 0 30 30">
      <circle cx="15" cy="15" r="15" fill="#f3780c" />
      <path d="M6 17c1-6 5-10 11-11l1-2 2 2c4 1 7 5 7 10 0 4-2 8-5 10 1-4 0-7-3-8-2 0-3 3-6 3-2 0-3-1-3-2l3-1c-3-1-5 0-7-1z" fill="#fff" />
      <path d="M13 12l4-2-1 3z" fill="#f3780c" />
      <path d="M22 9c3 3 4 8 1 14 1-5 1-9-1-14z" fill="#f8b26b" />
    </svg>
  );
}

function NotepadIcon() {
  return (
    <svg width="32" height="30" viewBox="0 0 32 30">
      <path d="M12 3h17l2 23-8 3z" fill="#9c8460" />
      <path d="M10 2h18l-6 26L1 24z" fill="#c7e6ee" />
      <path d="M8 8h17l-4 19L2 23z" fill="#5db1c6" />
      <path d="M16 7l10 0-4 20z" fill="#93d3de" />
      <path d="M11 1v4M14 1v4M17 1v4M20 1v4M23 1v4M26 1v4" stroke="#6f8a90" />
    </svg>
  );
}

function StudioIcon() {
  return (
    <div className="flex flex-col items-center">
      <svg width="24" height="15" viewBox="0 0 24 15" fill="none">
        <path d="M2 5l2-3 3 1 4-2 3 2 5-2 3 3-1 4 1 4-4 1-4-1-3 2-4-2-4 1-1-4z" fill="#9bd2cd" stroke="#3c8e88" strokeDasharray="3 1" />
        <path d="M6 4v8M10 4c4-1 4 3 1 5l-1 2h5M18 4c3 0 3 3 0 3 3 1 3 4-1 4" stroke="#2d7e78" strokeWidth="1.300" />
        <path d="M15 5l2-1-1 3z" fill="#e8c53d" />
      </svg>
      <div className="mt-[2px] font-['Noto_Sans_CJK_SC',sans-serif] text-[6px] font-bold leading-[6px] text-[#151515]">首家严选</div>
      <div className="text-[4px] leading-[5px] text-[#444]">·SINCE 2008·</div>
    </div>
  );
}

function PaletteIcon() {
  return (
    <svg width="36" height="34" viewBox="0 0 36 34">
      <path d="M0 0h16v16H0z" fill="#79b8f2" />
      <path d="M16 0h16v16H16z" fill="#8fd893" />
      <path d="M0 16h16v16H0z" fill="#ffc58d" />
      <path d="M16 16h16v16H16z" fill="#b9bdb9" />
      <circle cx="16" cy="16" r="13" fill="#fff" opacity=".45" />
      <path d="M1 2l3-2 14 14-4 4z" fill="#c33f55" />
      <circle cx="16.500" cy="16.500" r="4.500" fill="#fb1d14" />
      <path d="M18 17v15.500l3.500-3 2.500 5 2.500-1.300-2.500-5h5z" fill="#fff" stroke="#000" />
    </svg>
  );
}

const openSlot =
  'border border-[#1e4b5b] rounded-[2px] bg-linear-to-br from-[#a9cdd4] via-[#5ba0b0] to-[#3f92a7] shadow-[inset_0_0_0_1px_rgba(255,255,255,0.45)]';
const litSlot =
  'border border-[#35515b] rounded-[2px] bg-linear-to-br from-[#eff5f5] via-[#b8d3d8] to-[#c9dfe4] shadow-[inset_0_0_0_1px_rgba(255,255,255,0.7)]';

const slots: { id: string; look: string; icon: ReactNode }[] = [
  { id: 'desktop', look: '', icon: <DesktopIcon /> },
  { id: 'trader', look: '', icon: <TraderIcon /> },
  { id: 'browser', look: '', icon: <CheetahIcon /> },
  { id: 'wechat', look: openSlot, icon: <WeChat size={34} /> },
  { id: 'notepad', look: '', icon: <NotepadIcon /> },
  { id: 'studio', look: litSlot, icon: <StudioIcon /> },
  { id: 'note', look: openSlot, icon: <BlueNote size={32} /> },
  { id: 'palette', look: '', icon: <div className="-mr-1"><PaletteIcon /></div> },
  {
    id: 'ps',
    look: '',
    icon: (
      <div className="-mt-1 flex h-[26px] w-[28px] items-center justify-center bg-linear-to-b from-[#2f6fc4] to-[#12305f] font-['Open_Sans',sans-serif] text-[13px] font-semibold text-white shadow-md">
        Ps
      </div>
    ),
  },
  { id: 'cat', look: openSlot, icon: <BossCat size={32} /> },
];

function Speaker({ muted }: { muted?: boolean }) {
  return (
    <svg width="18" height="16" viewBox="0 0 18 16">
      <path d="M1 5h3l5-4v14l-5-4H1z" fill={muted ? '#f2f2f2' : '#b5452b'} stroke={muted ? '#777' : '#f0d6cc'} />
      {muted ? (
        <>
          <circle cx="12" cy="11" r="4.500" fill="#fff" stroke="#d8232a" strokeWidth="1.800" />
          <path d="M9 8l6 6" stroke="#d8232a" strokeWidth="1.800" />
        </>
      ) : (
        <path d="M11.500 4c1.500 2 1.500 6 0 8M14.500 2c2.500 3 2.500 9 0 12" stroke="#5c2418" fill="none" />
      )}
    </svg>
  );
}

const tray: ReactNode[] = [
  <BlueNote size={16} />,
  <svg width="16" height="16" viewBox="0 0 16 16">
    <path d="M1 2l7-1 7 1v6c0 4-4 6-7 7-3-1-7-3-7-7z" fill="#2e7bf0" stroke="#fff" strokeWidth="1.400" />
    <path d="M4 5l4 3 4-3M5 9.500l3 2 3-2" stroke="#fff" strokeWidth="1.400" fill="none" />
  </svg>,
  <BossCat size={16} />,
  <WeChat size={17} />,
  <svg width="16" height="16" viewBox="0 0 16 16">
    <rect width="16" height="16" rx="1" fill="#e8f4fc" />
    <path d="M1 2h4v4H2v8M7 2h3v4H7zM12 2v5M14 2v4M5 9h4v5H5zM11 9h4M11 12h3M8 7h5" stroke="#1680d0" strokeWidth="1.600" fill="none" />
  </svg>,
  <Speaker />,
  <svg width="17" height="17" viewBox="0 0 17 17">
    <path d="M3 0h5v4H3z" fill="#e6e6e6" />
    <path d="M1 4h9v7l-3 2v3H5v-3l-4-2z" fill="#8e9596" />
    <circle cx="12" cy="12" r="4.800" fill="#1f9a3a" />
    <path d="M9.500 12l2 2 3-4" stroke="#fff" strokeWidth="1.500" fill="none" />
  </svg>,
  <Speaker muted />,
  <svg width="16" height="13" viewBox="0 0 16 13" shapeRendering="crispEdges">
    <path d="M1 10h2v3H1zM4 8h2v5H4zM7 5h2v8H7zM10 3h2v10h-2zM13 0h2v13h-2z" fill="#fff" />
  </svg>,
];

const statusCells = ['w-[135px]', 'w-[117px]', 'w-[82px]', 'w-[81px]', 'w-[78px]', 'w-[80px]', 'w-[78px]', 'w-[144px]'];

export default function App() {
  return (
    <div className="flex h-[1006px] w-[1920px] flex-col overflow-hidden bg-[#f0f0f0] font-['Open_Sans','Noto_Sans_CJK_SC',sans-serif]">
      {/* Chart windows */}
      <div className="flex h-[921px]">
        <div className="flex w-[2px] flex-col bg-[#a0a0a0]">
          <div className="h-8 bg-[#ffff00]" />
        </div>
        <div className="grid grid-cols-[958px_958px] grid-rows-[459px_462px] bg-[#a0a0a0]">
          <ChartWindow c={m30} active />
          <ChartWindow c={h1} />
          <ChartWindow c={h4} lower />
          <ChartWindow c={daily} lower />
        </div>
        <div className="flex w-[2px] flex-col bg-[#f0f0f0]">
          <div className="h-8 bg-[#ffff00]" />
        </div>
      </div>

      {/* Chart tabs */}
      <div className="mt-[2px] flex h-[20px] items-start border-t border-black pl-[6px] text-[13px] leading-[16px] tracking-[-0.22px] text-[#757575]">
        <div className="-mt-px h-[19px] w-[100px] border border-t-0 border-r-2 border-black bg-white pl-[9px] pt-[2px] text-black">
          XAUUSD,M30
        </div>
        <div className="mt-[2px] flex">
          <div className="h-[16px] w-[92px] pl-[11px]">XAUUSD,H4</div>
          <div className="mt-[1px] h-[13px] border-l border-[#555]" />
          <div className="w-[91px] pl-[10px] leading-[16px]">XAUUSD,H1</div>
          <div className="mt-[1px] h-[13px] border-l border-[#555]" />
          <div className="w-[103px] pl-[10px]">XAUUSD,Daily</div>
          <div className="mt-[1px] h-[13px] border-l border-[#555]" />
        </div>
        <div className="ml-auto mr-[9px] mt-[5px] flex gap-[15px]">
          <svg width="4" height="7" viewBox="0 0 4 7"><path d="M4 0v7L0 3.500z" fill="#777" /></svg>
          <svg width="4" height="7" viewBox="0 0 4 7"><path d="M0 0v7l4-3.500z" fill="#777" /></svg>
        </div>
      </div>

      {/* Status bar */}
      <div className="flex h-[23px] items-center border-t border-white text-[12px] text-black">
        <div className="w-[1124px] pl-[2px] pt-[2px] tracking-[-0.1px]">寻求帮助,请按F1键</div>
        {statusCells.map((w, i) => (
          <div key={i} className={`flex h-[18px] items-center border-l border-[#9c9c9c] ${w}`}>
            {i === 0 && <span className="ml-[5px] mt-px">黄金</span>}
            {i === 7 && (
              <>
                <svg width="24" height="13" viewBox="0 0 24 13" className="ml-[5px]" shapeRendering="crispEdges">
                  {[0, 1, 2, 3, 4, 5, 6, 7].map((k) => (
                    <g key={k}>
                      <rect x={k * 3} y="0" width="2" height={Math.max(1, 10 - k)} fill="#5f7a14" />
                      <rect x={k * 3} y={11 - k} width="2" height={2 + k} fill="#123f66" />
                    </g>
                  ))}
                </svg>
                <span className="ml-[4px] text-[13px] tracking-[-0.2px]">3706/2 kb</span>
              </>
            )}
          </div>
        ))}
      </div>

      {/* Taskbar */}
      <div className="relative flex h-[40px] border-t border-[#1f3d4c] bg-linear-to-r from-[#6f9a7d] via-[#2f8ea6] via-[3%] to-[#3f99b0] to-[42%]">
        <div className="absolute inset-y-0 left-[814px] w-[550px] bg-[linear-gradient(75deg,#badcff_0%,#b3d4f6_22%,#badcff_36%,#b8dbfd_52%,#accdf0_70%,#badcff_76%,#badcff_92%,#b0d0f0_100%)] blur-[1px]" />
        <div className="absolute inset-y-0 left-[1364px] right-0 overflow-hidden bg-linear-to-r from-[#2f8ba5] via-[#2f8aa4] via-[25%] to-[#266b82] to-[33%]">
          <div className="absolute -bottom-[74px] -right-[50px] h-[110px] w-[104px] rotate-[25deg] rounded-full bg-[#86a05a]/80 blur-xs" />
        </div>
        <div className="absolute inset-x-0 top-0 h-px bg-white/45" />
        <div className="relative flex w-[60px] items-center pl-[9px]">
          <StartOrb />
        </div>
        <div className="relative flex gap-1">
          {slots.map((s) => (
            <div key={s.id} className={`flex h-[39px] w-[58px] items-center justify-center ${s.look}`}>
              {s.icon}
            </div>
          ))}
        </div>
        <div className="relative ml-auto flex items-center text-white">
          <div className="mb-1 flex h-[16px] w-[16px] -rotate-6 items-center justify-center rounded-[3px] bg-[#f4511e] text-[15px] font-extrabold leading-none">
            S
          </div>
          <div className="mb-1 ml-[7px] flex h-[16px] w-[16px] items-center justify-center rounded-full border border-[#c9d4f0] bg-[#1a2b9c] text-[11px] font-bold leading-none">
            ?
          </div>
          <div className="ml-[8px] flex w-[17px] flex-col items-start gap-[7px] pb-[3px] pl-[1px]">
            <svg width="9" height="7" viewBox="0 0 9 7" fill="none" stroke="#fff">
              <path d="M3 2.500v-2h5.500v3.500H6M.5 2.500H6v4H.5z" />
            </svg>
            <svg width="5" height="3" viewBox="0 0 5 3" className="ml-[1px]"><path d="M0 0h5L2.500 3z" fill="#fff" /></svg>
          </div>
          {tray.map((icon, i) => (
            <div
              key={i}
              className={`flex h-[39px] w-6 items-center justify-center pt-[1px] ${
                i === 1 ? 'border-x border-[#16465a] bg-radial-[at_50%_100%] from-[#a8d4ff] via-[#3b7f9c] via-[25%] to-[#1d5a70] to-[60%]' : ''
              }`}
            >
              {icon}
            </div>
          ))}
          <div className="w-[80px] text-center text-[12px] leading-[18px]">
            <div>8:33</div>
            <div>2022/1/6</div>
          </div>
          <div className="mr-[1px] h-[39px] w-[13px] border border-[#3e5a3c] bg-linear-to-b from-[#8fa77c] to-[#a6bd72] shadow-[inset_1px_1px_0_rgba(255,255,255,0.5)]" />
        </div>
      </div>
    </div>
  );
}
